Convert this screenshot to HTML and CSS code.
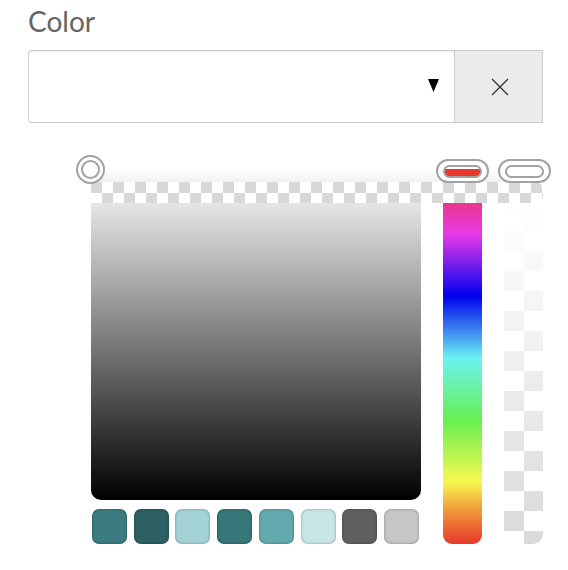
FILE: index.html
```html
<!DOCTYPE html>
<html>
<head>
<meta charset="utf-8">
<link rel="stylesheet" href="styles.css">
</head>
<body>
<div class="field">
  <label class="label">Color</label>
  <div class="select-row">
    <div class="select">
      <svg class="caret" width="11" height="13" viewBox="0 0 11 13"><polygon points="0,0 11,0 5.5,13" fill="#000"/></svg>
    </div>
    <button class="clear" type="button">
      <svg width="18" height="18" viewBox="0 0 18 18"><path d="M1 1 L17 17 M17 1 L1 17" stroke="#333" stroke-width="1.3" fill="none"/></svg>
    </button>
  </div>
  <div class="picker">
    <div class="fade"></div>
    <div class="strip"></div>
    <div class="body">
      <div class="sat-col">
        <div class="sat"></div>
        <div class="swatches">
          <span class="swatch" style="background:#3a7c80"></span>
          <span class="swatch" style="background:#2c6062"></span>
          <span class="swatch" style="background:#a3d3d6"></span>
          <span class="swatch" style="background:#367779"></span>
          <span class="swatch" style="background:#63aaae"></span>
          <span class="swatch" style="background:#c8e5e7"></span>
          <span class="swatch" style="background:#606060"></span>
          <span class="swatch" style="background:#c6c6c6"></span>
        </div>
      </div>
      <div class="hue"></div>
      <div class="alpha"></div>
    </div>
    <div class="handle-circle"><span></span></div>
    <div class="handle-pill hue-handle"><span></span></div>
    <div class="handle-pill alpha-handle"><span></span></div>
  </div>
</div>
</body>
</html>
```

FILE: styles.css
```css
html, body {
  margin: 0;
  padding: 0;
  background: #fff;
}

.field {
  padding: 4px 25px 0 28px;
  font-family: Lato, "Open Sans", sans-serif;
}

.label {
  display: block;
  font-size: 28px;
  line-height: 34px;
  color: #666;
  margin-bottom: 12px;
}

.select-row {
  display: flex;
  height: 73px;
}

.select {
  flex: 1;
  border: 1px solid #ccc;
  border-right: none;
  border-radius: 4px 0 0 4px;
  box-shadow: inset 0 1px 1px rgba(0,0,0,0.075);
  display: flex;
  align-items: center;
  justify-content: flex-end;
  padding-right: 15px;
  padding-bottom: 3px;
  background: #fff;
}

.caret {
  display: block;
}

.clear {
  width: 89px;
  border: 1px solid #ccc;
  background: #ebebeb;
  margin: 0;
  padding: 0 0 0 2px;
  display: flex;
  align-items: center;
  justify-content: center;
  border-radius: 0;
}

.clear svg {
  display: block;
}

.picker {
  position: relative;
  margin: 47px 0 0 63px;
  width: 452px;
}

.fade {
  height: 12px;
  background: linear-gradient(#fff, #f1f1f1);
}

.strip {
  height: 21px;
  background: repeating-conic-gradient(#fff 0 25%, #d8d8d8 0 50%) 0 0 / 22px 22px;
  border-radius: 0 8px 8px 8px;
}

.body {
  display: flex;
  gap: 22px;
}

.sat-col {
  width: 330px;
  display: flex;
  flex-direction: column;
}

.sat {
  height: 297px;
  background: linear-gradient(#e6e6e6, #000);
  border-radius: 0 0 10px 10px;
}

.swatches {
  display: flex;
  justify-content: space-between;
  width: 327px;
  padding-left: 1px;
  margin-top: 9px;
}

.swatch {
  width: 35px;
  height: 35px;
  border-radius: 7px;
  box-shadow: inset 0 0 3px rgba(0,0,0,0.35);
}

.hue {
  width: 39px;
  height: 341px;
  border-radius: 0 0 9px 9px;
  background: linear-gradient(#e8388c 0%, #e83ae8 9%, #0000ee 27.3%, #6cf2f2 45.5%, #66f050 63.6%, #f8f850 81.8%, #f09a3a 90%, #e8382c 100%);
}

.alpha {
  width: 39px;
  height: 341px;
  border-radius: 0 0 10px 0;
  background:
    linear-gradient(rgba(255,255,255,1), rgba(255,255,255,0.6) 45%, rgba(255,255,255,0)),
    repeating-conic-gradient(#d9d9d9 0 25%, #fff 0 50%) 0 8px / 40px 40px;
}

.handle-circle {
  position: absolute;
  left: -15px;
  top: -15px;
  width: 25px;
  height: 25px;
  border: 2px solid #a2a2a2;
  border-radius: 50%;
  background: #fff;
  display: flex;
  align-items: center;
  justify-content: center;
}

.handle-circle span {
  width: 15px;
  height: 15px;
  border: 2px solid #a2a2a2;
  border-radius: 50%;
  background: #fff;
}

.handle-pill {
  position: absolute;
  top: -11px;
  width: 49px;
  height: 20px;
  border: 2px solid #a2a2a2;
  border-radius: 14px;
  background: #fff;
  display: flex;
  align-items: center;
  justify-content: center;
}

.handle-pill span {
  width: 35px;
  height: 9px;
  border: 2px solid #a2a2a2;
  border-radius: 8px;
  background: #fff;
}

.hue-handle {
  left: 345px;
}

.hue-handle span {
  background: linear-gradient(#fff 25%, #e8382c 25%);
}

.alpha-handle {
  left: 407px;
}
```
